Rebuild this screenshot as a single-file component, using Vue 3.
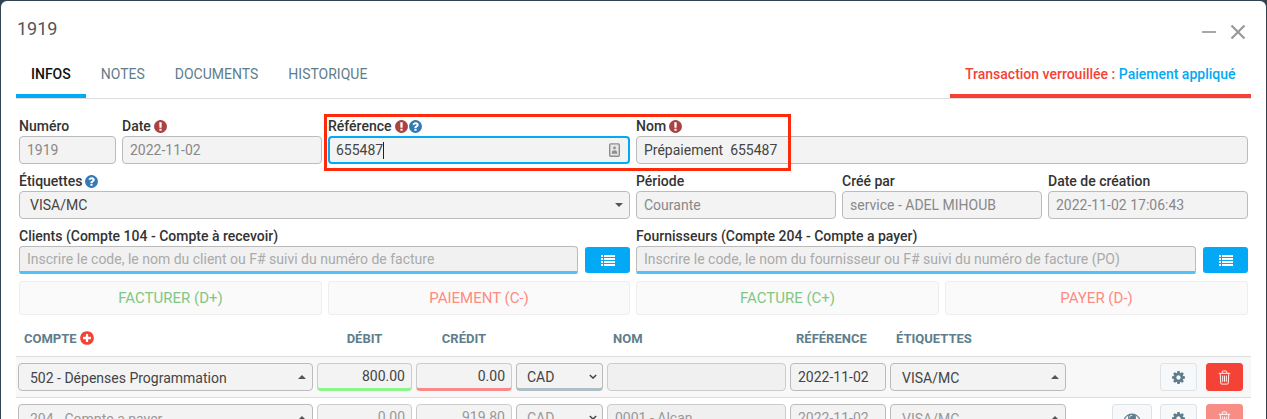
<script setup>
const ICON = {
  alert: 'M896 128q209 0 385.5 103t279.5 279.5 103 385.5-103 385.5-279.5 279.5-385.5 103-385.5-103-279.5-279.5-103-385.5 103-385.5 279.5-279.5 385.5-103zm128 1247v-190q0-14-9-23.5t-22-9.5h-192q-13 0-23 10t-10 23v190q0 13 10 23t23 10h192q13 0 22-9.5t9-23.5zm-2-344l18-621q0-12-10-18-10-8-24-8h-220q-14 0-24 8-10 6-10 18l17 621q0 10 10 17.5t24 7.5h185q14 0 23.5-7.5t10.5-17.5z',
  help: 'M1024 1376v-192q0-14-9-23t-23-9h-192q-14 0-23 9t-9 23v192q0 14 9 23t23 9h192q14 0 23-9t9-23zm256-672q0-88-55.5-163t-138.5-116-170-41q-243 0-371 213-15 24 8 42l132 100q7 6 19 6 16 0 25-12 53-68 86-92 34-24 86-24 48 0 85.5 26t37.5 59q0 38-20 61t-68 45q-63 28-115.5 86.5t-52.5 125.5v36q0 14 9 23t23 9h192q14 0 23-9t9-23q0-19 21.5-49.5t54.5-49.5q32-18 49-28.5t46-35 44.5-48 28-60.5 12.5-81zm384 192q0 209-103 385.5t-279.5 279.5-385.5 103-385.5-103-279.5-279.5-103-385.5 103-385.5 279.5-279.5 385.5-103 385.5 103 279.5 279.5 103 385.5z',
  plus: 'M1344 960v-128q0-26-19-45t-45-19h-256v-256q0-26-19-45t-45-19h-128q-26 0-45 19t-19 45v256h-256q-26 0-45 19t-19 45v128q0 26 19 45t45 19h256v256q0 26 19 45t45 19h128q26 0 45-19t19-45v-256h256q26 0 45-19t19-45zm320-64q0 209-103 385.5t-279.5 279.5-385.5 103-385.5-103-279.5-279.5-103-385.5 103-385.5 279.5-279.5 385.5-103 385.5 103 279.5 279.5 103 385.5z',
  cog: 'M1152 896q0-106-75-181t-181-75-181 75-75 181 75 181 181 75 181-75 75-181zm512-109v222q0 12-8 23t-20 13l-185 28q-19 54-39 91 35 50 107 138 10 12 10 25t-9 23q-27 37-99 108t-94 71q-12 0-26-9l-138-108q-44 23-91 38-16 136-29 186-7 28-36 28h-222q-14 0-24.5-8.5t-11.5-21.5l-28-184q-49-16-90-37l-141 107q-10 9-25 9-14 0-25-11-126-114-165-168-7-10-7-23 0-12 8-23 15-21 51-66.5t54-70.5q-27-50-41-99l-183-27q-13-2-21-12.5t-8-23.5v-222q0-12 8-23t19-13l186-28q14-46 39-92-40-57-107-138-10-12-10-24 0-10 9-23 26-36 98.5-107.5t94.5-71.5q13 0 26 10l138 107q44-23 91-38 16-136 29-186 7-28 36-28h222q14 0 24.5 8.5t11.5 21.5l28 184q49 16 90 37l142-107q9-9 24-9 13 0 25 10 129 119 165 170 7 8 7 22 0 12-8 23-15 21-51 66.5t-54 70.5q26 50 41 98l183 28q13 2 21 12.5t8 23.5z',
  eye: 'M1664 960q-152-236-381-353 61 104 61 225 0 185-131.5 316.5t-316.5 131.5-316.5-131.5-131.5-316.5q0-121 61-225-229 117-381 353 133 205 333.5 326.5t434.5 121.5 434.5-121.5 333.5-326.5zm-720-384q0-20-14-34t-34-14q-125 0-214.5 89.5t-89.5 214.5q0 20 14 34t34 14 34-14 14-34q0-86 61-147t147-61q20 0 34-14t14-34zm848 384q0 34-20 69-140 230-376.5 368.5t-499.5 138.5-499.5-139-376.5-368q-20-35-20-69t20-69q140-229 376.5-368t499.5-139 499.5 139 376.5 368q20 35 20 69z'
}

const tabs = ['NOTES', 'DOCUMENTS', 'HISTORIQUE']
const nom = 'Prépaiement  655487'
const meta = [
  { label: 'Période', value: 'Courante' },
  { label: 'Créé par', value: 'service - ADEL MIHOUB' },
  { label: 'Date de création', value: '2022-11-02 17:06:43' }
]
const heads = [
  { text: 'DÉBIT', center: true },
  { text: 'CRÉDIT', center: true },
  { text: '' },
  { text: 'NOM' },
  { text: 'RÉFÉRENCE' },
  { text: 'ÉTIQUETTES' }
]
const rows = [
  { compte: '502 - Dépenses Programmation', debit: '800.00', credit: '0.00', nom: '', ref: '2022-11-02', etiq: 'VISA/MC', eye: false, active: true },
  { compte: '204 - Compte a payer', debit: '0.00', credit: '919.80', nom: '0001 - Alcan', ref: '2022-11-02', etiq: 'VISA/MC', eye: true, active: false }
]
</script>

<template>
  <div class="modal">
    <header class="title-bar">
      <h1 class="title">1919</h1>
      <div class="window-tools">
        <span class="minimize"></span>
        <svg class="close" viewBox="0 0 16 16"><path d="M1.5 1.5l13 13M14.5 1.5l-13 13" /></svg>
      </div>
    </header>

    <nav class="tabs">
      <a class="tab tab-active">INFOS</a>
      <a v-for="t in tabs" :key="t" class="tab">{{ t }}</a>
      <div class="tab-status">Transaction verrouillée : <span class="status-blue">Paiement appliqué</span></div>
    </nav>

    <section class="form">
      <div class="form-row">
        <div class="col w-num">
          <label class="lbl">Numéro</label>
          <div class="field muted">1919</div>
        </div>
        <div class="col w-meta">
          <label class="lbl">Date
            <svg class="ico alert" viewBox="0 0 1792 1792"><path :d="ICON.alert" /></svg>
          </label>
          <div class="field muted">2022-11-02</div>
        </div>
        <div class="col w-ref">
          <label class="lbl">Référence
            <svg class="ico alert" viewBox="0 0 1792 1792"><path :d="ICON.alert" /></svg>
            <svg class="ico help" viewBox="0 0 1792 1792"><path :d="ICON.help" /></svg>
          </label>
          <div class="field focused">
            <span>655487</span><i class="caret"></i>
            <svg class="contact" viewBox="0 0 12 15">
              <rect x="0.75" y="0.75" width="10.5" height="13.5" rx="1" />
              <circle cx="6" cy="5.2" r="1.5" />
              <path d="M3 11.5c0-2.4 1.2-3.6 3-3.6s3 1.2 3 3.6z" />
            </svg>
          </div>
        </div>
        <div class="col grow">
          <label class="lbl">Nom
            <svg class="ico alert" viewBox="0 0 1792 1792"><path :d="ICON.alert" /></svg>
          </label>
          <div class="field dark pre">{{ nom }}</div>
        </div>
      </div>

      <div class="form-row">
        <div class="col w-half">
          <label class="lbl">Étiquettes
            <svg class="ico help" viewBox="0 0 1792 1792"><path :d="ICON.help" /></svg>
          </label>
          <div class="field dark select-top">VISA/MC<i class="arrow-down"></i></div>
        </div>
        <div v-for="m in meta" :key="m.label" class="col w-meta">
          <label class="lbl">{{ m.label }}</label>
          <div class="field muted">{{ m.value }}</div>
        </div>
      </div>

      <div class="form-row">
        <div class="col w-half">
          <label class="lbl">Clients (Compte 104 - Compte à recevoir)</label>
          <div class="search-line">
            <div class="field search">Inscrire le code, le nom du client ou F# suivi du numéro de facture</div>
            <button class="list-btn">
              <svg viewBox="0 0 14 11"><path d="M0 0h2v2H0zM3 0h11v2H3zM0 3h2v2H0zM3 3h11v2H3zM0 6h2v2H0zM3 6h11v2H3zM0 9h2v2H0zM3 9h11v2H3z" /></svg>
            </button>
          </div>
        </div>
        <div class="col grow">
          <label class="lbl">Fournisseurs (Compte 204 - Compte a payer)</label>
          <div class="search-line">
            <div class="field search">Inscrire le code, le nom du fournisseur ou F# suivi du numéro de facture (PO)</div>
            <button class="list-btn">
              <svg viewBox="0 0 14 11"><path d="M0 0h2v2H0zM3 0h11v2H3zM0 3h2v2H0zM3 3h11v2H3zM0 6h2v2H0zM3 6h11v2H3zM0 9h2v2H0zM3 9h11v2H3z" /></svg>
            </button>
          </div>
        </div>
      </div>

      <div class="action-row">
        <button class="act green">FACTURER (D+)</button>
        <button class="act red">PAIEMENT (C-)</button>
        <button class="act green">FACTURE (C+)</button>
        <button class="act red">PAYER (D-)</button>
      </div>
    </section>

    <section class="table">
      <div class="grid thead">
        <div class="th">COMPTE
          <svg class="ico plus" viewBox="0 0 1792 1792"><path :d="ICON.plus" /></svg>
        </div>
        <div v-for="(h, i) in heads" :key="i" class="th" :class="{ center: h.center }">{{ h.text }}</div>
      </div>

      <div v-for="r in rows" :key="r.compte" class="grid trow" :class="{ active: r.active }">
        <div class="cell big">{{ r.compte }}<i class="arrow-up"></i></div>
        <div class="cell num debit">{{ r.debit }}</div>
        <div class="cell num credit">{{ r.credit }}</div>
        <div class="cell cur">CAD
          <svg class="chev" viewBox="0 0 10 6"><path d="M1 1l4 4 4-4" /></svg>
        </div>
        <div class="cell plain">{{ r.nom }}</div>
        <div class="cell date">{{ r.ref }}</div>
        <div class="cell big">{{ r.etiq }}<i class="arrow-up"></i></div>
        <div class="row-actions">
          <button v-if="r.eye" class="tool wide">
            <svg viewBox="0 0 1792 1792"><path :d="ICON.eye" /></svg>
          </button>
          <button class="tool">
            <svg viewBox="0 0 1792 1792"><path :d="ICON.cog" /></svg>
          </button>
          <button class="trash">
            <svg viewBox="0 0 14 16">
              <path d="M0.8 3.5h12.4M4.6 3.3V1.8c0-.5.3-.9.9-.9h3c.6 0 .9.4.9.9v1.5M2.4 3.6l.5 10.2c0 .8.5 1.3 1.2 1.3h5.8c.7 0 1.2-.5 1.2-1.3l.5-10.2M5 6v6.6M7 6v6.6M9 6v6.6" />
            </svg>
          </button>
        </div>
      </div>
    </section>

    <div class="highlight"></div>
  </div>
</template>

<style scoped>
.modal {
  position: relative;
  margin: 1px 1px 0;
  height: 418px;
  overflow: hidden;
  background: #fff;
  border-radius: 6px 6px 0 0;
  font-family: Roboto, "Liberation Sans", sans-serif;
  color: #333;
}
.title-bar {
  height: 55px;
  display: flex;
  align-items: center;
  justify-content: space-between;
  padding: 0 20px 0 16px;
}
.title {
  margin: 0;
  font-size: 18px;
  font-weight: 400;
  color: #555;
}
.window-tools {
  display: flex;
  align-items: center;
  gap: 14px;
  padding-top: 7px;
}
.minimize {
  width: 14px;
  height: 2px;
  background: #aaa;
}
.close {
  width: 16px;
  height: 16px;
  fill: none;
  stroke: #999;
  stroke-width: 2.2;
}
.tabs {
  height: 42px;
  margin: 0 15px;
  display: flex;
  border-bottom: 1px solid #ddd;
  box-sizing: content-box;
}
.tab {
  padding: 0 15px;
  height: 42px;
  line-height: 37px;
  box-sizing: border-box;
  font-size: 14px;
  color: #607d8b;
}
.tab-active {
  color: #111;
  font-weight: 500;
  border-bottom: 4px solid #03a9f4;
}
.tab-status {
  margin-left: auto;
  width: 301px;
  height: 42px;
  box-sizing: border-box;
  padding-left: 15px;
  line-height: 37px;
  font-size: 14px;
  font-weight: 500;
  white-space: nowrap;
  color: #f44336;
  border-bottom: 4px solid #f44336;
}
.status-blue {
  color: #03a9f4;
}
.form {
  padding: 17px 18px 0;
  display: flex;
  flex-direction: column;
  gap: 7px;
}
.form-row {
  display: flex;
  gap: 6px;
}
.col {
  display: flex;
  flex-direction: column;
  min-width: 0;
}
.w-num { width: 97px; }
.w-meta { width: 200px; }
.w-ref { width: 302px; }
.w-half { width: 611px; }
.grow { flex: 1; }
.lbl {
  height: 20px;
  line-height: 20px;
  font-size: 14px;
  font-weight: 500;
  color: #333;
  display: flex;
  align-items: center;
  gap: 2px;
  white-space: nowrap;
}
.ico {
  width: 15px;
  height: 15px;
  flex: none;
}
.alert { fill: #a94442; }
.help { fill: #337ab7; }
.alert + .help { margin-left: -3px; }
.field {
  position: relative;
  height: 28px;
  box-sizing: border-box;
  border: 1px solid #bbb;
  border-radius: 4px;
  background: #f3f3f3;
  padding: 0 7px;
  line-height: 27px;
  font-size: 14px;
  white-space: nowrap;
  overflow: hidden;
}
.muted { color: #888; }
.dark { color: #444; }
.pre { white-space: pre; }
.select-top { padding-left: 10px; }
.focused {
  border: 2px solid #03a9f4;
  padding: 0 6px;
  color: #444;
  display: flex;
  align-items: center;
}
.caret {
  width: 1px;
  height: 17px;
  background: #222;
}
.contact {
  position: absolute;
  right: 8px;
  top: 5px;
  width: 11px;
  height: 14px;
}
.contact rect {
  fill: #e6e6e6;
  stroke: #8e8e8e;
  stroke-width: 1.5;
}
.contact circle, .contact path { fill: #8e8e8e; }
.arrow-down, .arrow-up {
  position: absolute;
  right: 6px;
  top: 50%;
  margin-top: -2px;
  width: 0;
  height: 0;
  border-left: 4px solid transparent;
  border-right: 4px solid transparent;
}
.arrow-down { border-top: 4px solid #555; }
.arrow-up { border-bottom: 4px solid #555; }
.search-line {
  display: flex;
  gap: 7px;
  align-items: center;
}
.search {
  flex: none;
  width: calc(100% - 52px);
  border-bottom: 3px solid #4fc3f7;
  border-radius: 4px 4px 2px 2px;
  color: #aaa;
  background: #f1f1f1;
  line-height: 25px;
}
.list-btn {
  flex: 1;
  height: 26px;
  padding: 0;
  border: none;
  border-radius: 3px;
  background: #03a9f4;
  display: flex;
  align-items: center;
  justify-content: center;
}
.list-btn svg {
  width: 14px;
  height: 11px;
  fill: #fff;
}
.action-row {
  display: grid;
  grid-template-columns: 303px 302px 303px 1fr;
  column-gap: 6px;
}
.act {
  height: 34px;
  border: 1px solid #eee;
  border-radius: 3px;
  background: #fafafa;
  font-family: inherit;
  font-size: 15px;
}
.green { color: #81c784; }
.red { color: #ff8a80; }
.table {
  margin: 0 15px;
}
.grid {
  display: grid;
  grid-template-columns: 295px 95px 96px 87px 179px 96px 176px 1fr;
  column-gap: 4px;
  padding-left: 2px;
}
.thead {
  height: 42px;
  align-items: center;
  border-bottom: 1px solid #ddd;
  box-sizing: border-box;
  padding-top: 5px;
}
.th {
  padding-left: 6px;
  font-size: 13px;
  font-weight: 700;
  color: #607d8b;
  display: flex;
  align-items: center;
  gap: 2px;
}
.th .plus {
  width: 16px;
  height: 16px;
  fill: #f44336;
}
.th.center {
  padding-left: 0;
  justify-content: center;
}
.trow {
  height: 41px;
  box-sizing: border-box;
  padding-top: 6px;
  border-bottom: 1px solid #ddd;
  background: #fff;
}
.trow.active {
  background: #f8f8f8;
}
.cell {
  position: relative;
  height: 28px;
  box-sizing: border-box;
  border: 1px solid #bbb;
  border-radius: 4px;
  background: #f3f3f3;
  padding: 0 7px;
  line-height: 26px;
  font-size: 14px;
  color: #999;
  white-space: nowrap;
  overflow: hidden;
}
.active .cell { color: #444; }
.big { padding-left: 11px; line-height: 28px; }
.num {
  text-align: right;
  padding-right: 6px;
  line-height: 25px;
  border-color: #ccc;
}
.debit { border-bottom: 3px solid #8bf58b; }
.credit { border-bottom: 3px solid #f88a8a; }
.trow:not(.active) .num { border-bottom: 1px solid #ccc; }
.cur {
  border-bottom: 3px solid #b0bec5;
  padding-left: 10px;
  line-height: 26px;
}
.trow:not(.active) .cur { border-bottom: 1px solid #bbb; }
.chev {
  position: absolute;
  right: 5px;
  top: 10px;
  width: 8px;
  height: 5px;
  fill: none;
  stroke: #444;
  stroke-width: 1.8;
}
.plain { background: #f0f0f0; border-color: #ccc; }
.row-actions {
  display: flex;
  justify-content: flex-end;
  gap: 9px;
  padding-right: 8px;
  height: 28px;
}
.tool, .trash {
  width: 37px;
  height: 28px;
  padding: 0;
  border-radius: 3px;
  display: flex;
  align-items: center;
  justify-content: center;
}
.tool {
  background: #f6f8fa;
  border: 1px solid #dde3e7;
}
.tool svg {
  width: 15px;
  height: 15px;
  fill: #607d8b;
}
.wide {
  width: 40px;
  margin-right: -1px;
}
.wide svg {
  width: 16px;
  height: 16px;
}
.trash {
  background: #f44336;
  border: 1px solid #f44336;
}
.trash svg {
  width: 13px;
  height: 15px;
  fill: none;
  stroke: #fff;
  stroke-width: 1;
}
.trow:not(.active) .trash {
  opacity: .6;
}
.highlight {
  position: absolute;
  left: 323px;
  top: 113px;
  width: 467px;
  height: 57px;
  box-sizing: border-box;
  border: 3px solid #ff2a0c;
  pointer-events: none;
}
</style>

<style>
html, body {
  height: 419px;
  overflow: hidden;
  background: #33434f;
}
</style>
